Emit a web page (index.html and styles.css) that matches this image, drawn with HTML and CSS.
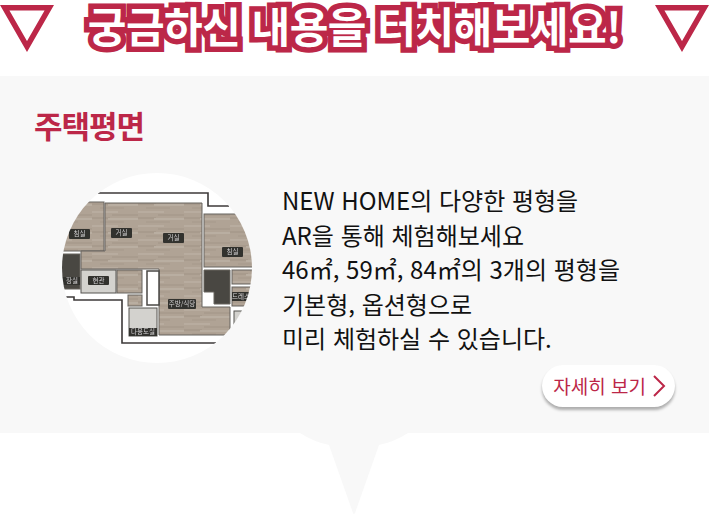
FILE: index.html
```html
<!DOCTYPE html>
<html lang="ko">

<head>
    <meta charset="UTF-8">
    <meta name="viewport" content="width=device-width, initial-scale=1.0">
    <title>주택평면</title>
    <link rel="stylesheet" href="styles.css">
</head>

<body>

    <header class="banner">
        <svg class="banner-arrow" viewBox="0 0 54 47">
            <path d="M4.75 2.75H49.25L27 41.5Z" />
        </svg>
        <h1 class="banner-title">궁금하신 내용을 터치해보세요!</h1>
        <svg class="banner-arrow" viewBox="0 0 54 47">
            <path d="M4.75 2.75H49.25L27 41.5Z" />
        </svg>
    </header>

    <section class="panel">
        <h2 class="panel-title">주택평면</h2>

        <div class="panel-body">
            <svg class="plan" viewBox="62 173 190 190">
                <defs>
                    <pattern id="wood" width="46" height="14" patternUnits="userSpaceOnUse">
                        <rect width="46" height="14" fill="#b0a395" />
                        <rect y="1" width="26" height="2" fill="#b8ac9f" />
                        <rect x="20" y="4" width="26" height="2" fill="#a99c8e" />
                        <rect y="7" width="18" height="2" fill="#a89b8d" />
                        <rect x="16" y="8" width="30" height="2" fill="#b9aea1" />
                        <rect x="8" y="11" width="24" height="2" fill="#ab9e90" />
                    </pattern>
                    <filter id="soft" x="-5%" y="-5%" width="110%" height="110%">
                        <feGaussianBlur stdDeviation="0.4" />
                    </filter>
                </defs>
                <rect x="62" y="173" width="190" height="190" fill="#fff" />

                <g class="plan-drawing">
                    <!-- rooms -->
                    <g class="wood">
                        <rect x="50" y="202" width="54" height="49" />
                        <path d="M105 203H202V307H230V335H159V269H81V251H105Z" />
                        <rect x="204" y="214" width="60" height="53" />
                        <rect x="232" y="270" width="30" height="14" />
                        <rect x="232" y="287" width="30" height="19" />
                        <rect x="117" y="270" width="25" height="23" />
                        <rect x="128" y="295" width="14" height="11" />
                    </g>
                    <g class="dark">
                        <path d="M204 270H230V304H214V292H204Z" />
                        <rect x="50" y="254" width="30" height="35" />
                    </g>
                    <g class="tile">
                        <rect x="81" y="270" width="35" height="23" />
                        <rect x="129" y="308" width="28" height="28" />
                        <rect x="234" y="311" width="26" height="14" />
                    </g>
                    <rect class="void" x="147" y="271" width="12" height="34" />

                    <!-- outer walls -->
                    <path class="wall" d="M98 193H208V206H229" />
                    <path class="wall" d="M50 297H74V300H122V343H216" />

                    <!-- room labels -->
                    <g class="tag">
                        <rect x="69" y="229" width="21" height="10" rx="1" />
                        <text x="79.5" y="236.3">침실</text>
                        <rect x="111" y="228" width="21" height="10" rx="1" />
                        <text x="121.5" y="235.3">거실</text>
                        <rect x="163" y="233" width="21" height="10" rx="1" />
                        <text x="173.5" y="240.3">거실</text>
                        <rect x="222" y="247" width="21" height="10" rx="1" />
                        <text x="232.5" y="254.3">침실</text>
                        <rect x="50" y="277" width="30" height="8" />
                        <text x="72" y="283.3">장실</text>
                        <rect x="88" y="276" width="21" height="9" rx="1" />
                        <text x="98.5" y="282.8">현관</text>
                        <rect x="168" y="299" width="28" height="10" rx="1" />
                        <text x="182" y="306.3">주방/식당</text>
                        <rect x="129" y="328" width="28" height="8" />
                        <text x="143" y="334.3">다용도실</text>
                        <rect x="232" y="292" width="30" height="9" />
                        <text x="241" y="298.8">드레스</text>
                    </g>
                </g>
            </svg>

            <div class="panel-copy">
                <p class="intro">
                    NEW HOME의 다양한 평형을<br>
                    AR을 통해 체험해보세요<br>
                    46㎡, 59㎡, 84㎡의 3개의 평형을<br>
                    기본형, 옵션형으로<br>
                    미리 체험하실 수 있습니다.
                </p>
                <a class="more" href="#">
                    자세히 보기
                    <svg class="more-icon" viewBox="0 0 14 24">
                        <path d="M2 2L12 12L2 22" />
                    </svg>
                </a>
            </div>
        </div>
    </section>

    <svg class="tail" viewBox="0 0 108 82">
        <path d="M0 0H108Q94 9 79 12L55 80Q54 82 53 80L29 12Q14 9 0 0Z" />
    </svg>

</body>

</html>
```

FILE: styles.css
```css
body {
    margin: 0;
    background: #fff;
    font-family: "Noto Sans CJK KR", "Noto Sans", sans-serif;
    overflow: hidden;
}

.banner {
    display: flex;
    justify-content: space-between;
    align-items: flex-start;
    height: 76px;
}

.banner-arrow {
    width: 54px;
    height: 47px;
    flex: none;
    margin-top: 5px;
}

.banner-arrow path {
    fill: none;
    stroke: #bc2748;
    stroke-width: 5.5;
}

.banner-title {
    margin: 0;
    font-size: 42px;
    line-height: 50px;
    font-weight: 700;
    letter-spacing: -0.5px;
    color: #fff;
    -webkit-text-stroke: 11px #bc2748;
    paint-order: stroke fill;
    white-space: nowrap;
}

.panel {
    background: #f8f8f8;
    height: 357px;
    padding: 29px 34px 0;
    box-sizing: border-box;
}

.panel-title {
    margin: 0;
    font-size: 31px;
    line-height: 40px;
    font-weight: 700;
    color: #bc2748;
    letter-spacing: -1px;
}

.panel-body {
    display: flex;
    margin-top: 28px;
    margin-left: 28px;
}

.plan {
    width: 190px;
    height: 190px;
    flex: none;
    border-radius: 50%;
}

.plan-drawing {
    filter: url(#soft);
}

.wood {
    fill: url(#wood);
    stroke: #66625e;
    stroke-width: 1;
}

.dark {
    fill: #4a4643;
    stroke: #66625e;
    stroke-width: 1;
}

.tile {
    fill: #d3d2ce;
    stroke: #55524f;
    stroke-width: 1;
}

.void {
    fill: #fff;
    stroke: #4a4845;
    stroke-width: 1.5;
}

.wall {
    fill: none;
    stroke: #3c3a38;
    stroke-width: 1.6;
}

.tag rect {
    fill: #33312f;
}

.tag text {
    font-size: 6.5px;
    fill: #d4d4d4;
    text-anchor: middle;
}

.panel-copy {
    display: flex;
    flex-direction: column;
    align-items: flex-end;
    flex: 1;
    margin-left: 30px;
}

.intro {
    align-self: stretch;
    margin: 10px 0 0;
    font-size: 24px;
    line-height: 34.5px;
    color: #111;
}

.more {
    display: flex;
    align-items: center;
    gap: 6px;
    height: 42px;
    margin-top: 9px;
    padding: 0 9px 0 11px;
    border-radius: 21px;
    background: #fff;
    box-shadow: 0 3px 3px rgba(0, 0, 0, 0.3);
    color: #bc2748;
    font-size: 19px;
    text-decoration: none;
}

.more-icon {
    width: 14px;
    height: 24px;
    fill: none;
    stroke: #bc2748;
    stroke-width: 2;
}

.tail {
    display: block;
    width: 108px;
    height: 82px;
    margin-left: 300px;
    fill: #f8f8f8;
}
```
